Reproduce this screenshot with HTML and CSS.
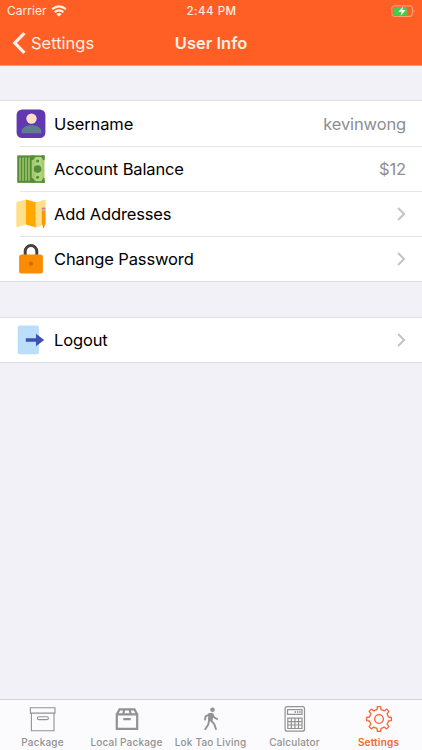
FILE: index.html
```
<!DOCTYPE html>
<html lang="en">
<head>
<meta charset="utf-8">
<title>User Info</title>
<link rel="stylesheet" href="styles.css">
</head>
<body>
<div class="app">
  <header class="header">
    <div class="status">
      <div class="carrier"><span class="carrier-name">Carrier</span>
        <svg width="16" height="12" viewBox="0 0 16 12" fill="none" stroke="#ffefe5" stroke-width="2.2"><path d="M1.2 4.2Q8-1.6 14.8 4.2M3.6 7.2Q8 3.6 12.4 7.2"/><path d="M5.3 9Q8 7 10.7 9L8 11.6Z" fill="#ffefe5" stroke="none"/></svg>
      </div>
      <span class="time">2:44 PM</span>
      <svg class="battery" width="25" height="13" viewBox="0 0 25 13"><rect x=".8" y=".8" width="20.6" height="10.6" rx="2.8" fill="none" stroke="#ff9c72" stroke-width="1.2"/><rect x="2.2" y="2.2" width="14.2" height="7.8" rx="1.3" fill="#45cc50"/><path d="M22.7 4.2Q24.7 6.1 22.7 8Z" fill="#ff9c72"/><path d="M12.4 1.4L7.3 6.7h3.5L9.5 10.8l5.3-5.7h-3.6Z" fill="#fff"/></svg>
    </div>
    <nav class="navbar">
      <div class="back"><svg width="14" height="22" viewBox="0 0 14 22" fill="none" stroke="#fff3ec" stroke-width="3.2"><path d="M12.4 1.2L2.8 11l9.6 9.8"/></svg><span class="back-text">Settings</span></div>
      <h1 class="title">User Info</h1>
    </nav>
  </header>
  <main class="content">
    <section class="group">
      <div class="row">
        <svg class="icon" viewBox="0 0 30 30"><rect x=".6" y=".5" width="28.8" height="28.5" rx="5.5" fill="#6039b2"/><path d="M5.6 24.2v-1.5C5.6 18.8 9.8 16.2 15.5 16.2S25.4 18.8 25.4 22.7v1.5Z" fill="#607d8b"/><circle cx="15.5" cy="9.6" r="5.2" fill="#ffdfc2"/></svg>
        <span class="label">Username</span><span class="value">kevinwong</span>
      </div>
      <div class="row">
        <svg class="icon" viewBox="0 0 30 30"><path fill="#a5cc74" d="M1.5 1.5h27v27.3h-27z"/><path fill="#568c38" d="M1.3 1.5h2v27.3h-2zM4.7 1.5h1.6v27.3h-1.6zM7.7 1.5h1.6v27.3H7.7zM10.7 1.5h1.6v27.3h-1.6zM13.7 1.5h2v27.3h-2zM1.3 1.5h27.3v2H1.3zM1.3 26.8h27.3v2H1.3z"/><path fill="#568c38" d="M15 1.5h4c0 3-1.3 4.7-4 4.7ZM28.6 1.5h-3c0 3 1 4.7 3 4.7ZM15 28.8h4c0-3-1.3-4.7-4-4.7ZM28.6 28.8h-3c0-3 1-4.7 3-4.7Z"/><path fill="#afd77c" d="M19.5 3h6v24.2h-6z"/><circle cx="21.6" cy="15.1" r="3.8" fill="#568c38"/><circle cx="21.6" cy="6.9" r="1.5" fill="#568c38"/><circle cx="21.6" cy="23.3" r="1.5" fill="#568c38"/></svg>
        <span class="label">Account Balance</span><span class="value">$12</span>
      </div>
      <div class="row">
        <svg class="icon" viewBox="0 0 30 30"><path d="M.3 3L10 .5v25L.3 28.5Z" fill="#ffe08a"/><path d="M10 .5L19.8 3.3v25.2L10 25.5Z" fill="#ffa800"/><path d="M19.8 3.3L29.6.5v24.7l-9.8 3.3Z" fill="#ffe08a"/><path d="M25.8 11h3.7v13.8L27.7 29 25.8 24.8Z" fill="#ff9800"/><path d="M25.8 9.8h3.7V12h-3.7Z" fill="#b0bec5"/><path d="M25.8 10.3V9.6q0-1.2 1.2-1.2h1.3q1.2 0 1.2 1.2v.7Z" fill="#e57373"/><path d="M27.1 27.5h1.2L27.7 29Z" fill="#6d4c30"/></svg>
        <span class="label">Add Addresses</span><svg class="chevron" viewBox="0 0 9 14"><path d="M1.1 1l6 6-6 6"/></svg>
      </div>
      <div class="row">
        <svg class="icon" viewBox="0 0 30 30"><path d="M9.2 13V7.3a5.8 5.8 0 0111.6 0V13" fill="none" stroke="#424242" stroke-width="3"/><rect x="3.1" y="10.5" width="23.8" height="19" rx="2.6" fill="#fb8c00"/><circle cx="15" cy="19.7" r="2.1" fill="#c76f0b"/></svg>
        <span class="label">Change Password</span><svg class="chevron" viewBox="0 0 9 14"><path d="M1.1 1l6 6-6 6"/></svg>
      </div>
    </section>
    <section class="group">
      <div class="row">
        <svg class="icon" viewBox="0 0 30 30"><rect x="1.7" y=".5" width="21.3" height="28.8" rx="2" fill="#bbdefb"/><path d="M9.8 13.2H20V8.7L28.2 15 20 21.3V16.8H9.8Z" fill="#3f51b5"/></svg>
        <span class="label">Logout</span><svg class="chevron" viewBox="0 0 9 14"><path d="M1.1 1l6 6-6 6"/></svg>
      </div>
    </section>
  </main>
  <footer class="tabs">
    <div class="tab"><svg viewBox="-14 -14 28 28" stroke-width="1.1"><path d="M-12.6-11.3h24.6v5.4H-12.6zM-11.6-5.9v17.6h22.6V-5.9"/><rect x="-5.6" y="-2.2" width="11" height="2.8" rx="1.4"/></svg><span>Package</span></div>
    <div class="tab"><svg viewBox="-14 -14 28 28" stroke-width="2.2"><path d="M-10.2-4.6h20.4V9.9h-20.4ZM-10.2-4.6L-7.5-9.6H7.5l2.7 5M-2.8-9.6L-3.8-4.6M2.7-9.6L3.7-4.6M-3.7.2h7.4"/></svg><span>Local Package</span></div>
    <div class="tab"><svg viewBox="-14 -14 28 28" stroke-width="1.9"><circle cx="1.5" cy="-9.2" r="2.3" fill="#929292" stroke="none"/><path d="M-2.7-5.8L1.6-6.2 2.6-3 1.3 2-3 1.4Z" fill="#929292" stroke="none"/><path d="M-1-5L-5.4-2.7-6.1 1.3M1.4-5.2L3.1-1.6 6.8.3M-1.7.8L-2.8 5.7-6.2 10.7M-.5 1L3.2 4.9 5.2 10.8"/></svg><span>Lok Tao Living</span></div>
    <div class="tab"><svg viewBox="-14 -14 28 28" stroke-width="1.2"><rect x="-9.9" y="-12.3" width="19.4" height="24.5" rx="2"/><path d="M-7.5-9.3H7v4.6H-7.5ZM.3-8v2M2.7-8v2M5-8v2M-7.2-.9H7V9.5H-7.2ZM-3.6-.9v10.4M-.1-.9v10.4M3.5-.9v10.4M-7.2 2.6H7M-7.2 6H7"/></svg><span>Calculator</span></div>
    <div class="tab active"><svg viewBox="-14 -14 28 28" stroke-width="1.3" stroke-linejoin="round"><path d="M-2-9.4-1.6-12.4 1.6-12.4 2-9.4Q3.8-9.1 5.23-8.06L7.64-9.9 9.9-7.64 8.06-5.23Q9.1-3.8 9.4-2L12.4-1.6 12.4 1.6 9.4 2Q9.1 3.8 8.06 5.23L9.9 7.64 7.64 9.9 5.23 8.06Q3.8 9.1 2 9.4L1.6 12.4-1.6 12.4-2 9.4Q-3.8 9.1-5.23 8.06L-7.64 9.9-9.9 7.64-8.06 5.23Q-9.1 3.8-9.4 2L-12.4 1.6-12.4-1.6-9.4-2Q-9.1-3.8-8.06-5.23L-9.9-7.64-7.64-9.9-5.23-8.06Q-3.8-9.1-2-9.4Z"/><circle r="4.4"/></svg><span>Settings</span></div>
  </footer>
</div>
</body>
</html>
```
FILE: styles.css
```
* { box-sizing: border-box; }
body { margin: 0; font-family: Inter, "Liberation Sans", sans-serif; background: #f2f1f7; }
svg { display: block; flex: none; }
.app { width: 422px; height: 750px; display: flex; flex-direction: column; overflow: hidden; white-space: nowrap; }
.header { height: 66px; background: #ff5e24; color: #ffefe5; border-bottom: 1px solid #f69c80; }
.status { height: 22px; display: grid; grid-template-columns: 1fr auto 1fr; align-items: center; padding: 0 6px 0 7px; font-size: 12px; line-height: 22px; }
.carrier { display: flex; align-items: center; gap: 4px; letter-spacing: 0.05px; }
.time { font-size: 11.5px; font-weight: 500; letter-spacing: 0.5px; }
.battery { justify-self: end; }
.navbar { height: 42px; display: grid; grid-template-columns: 1fr auto 1fr; align-items: center; padding: 0 12px; font-size: 16.5px; }
.back { display: flex; align-items: center; gap: 5px; letter-spacing: 0; }
.title { margin: 0; font-size: 16.5px; font-weight: 600; letter-spacing: 0; }
.content { flex: 1; padding-top: 34px; }
.group { background: #fff; border-top: 1px solid #e2e1e6; border-bottom: 1px solid #dedde2; margin-bottom: 35px; }
.row { height: 45px; display: flex; align-items: center; padding: 0 16px 1px; font-size: 16.5px; color: #000; background: linear-gradient(#e5e5e8, #e5e5e8) 20px 100% / 100% 1px no-repeat; }
.row:first-child { height: 46px; padding-bottom: 0; }
.row:last-child { height: 44px; padding-bottom: 0; background: none; }
.icon { width: 30px; height: 30px; margin-right: 8px; }
.label { letter-spacing: -0.13px; }
.value { margin-left: auto; color: #8e8e93; letter-spacing: -0.13px; }
.chevron { width: 9px; height: 14px; margin-left: auto; fill: none; stroke: #c3c3c7; stroke-width: 2; }
.tabs { height: 51px; background: #fbfbfd; border-top: 1px solid #d5d3db; display: grid; grid-template-columns: repeat(5, 84px); padding-left: 0.5px; }
.tab { display: flex; flex-direction: column; align-items: center; padding-top: 5px; color: #929292; font-size: 10px; font-weight: 500; letter-spacing: 0.2px; }
.tab svg { width: 28px; height: 28px; fill: none; stroke: #929292; }
.tab span { line-height: 14px; margin-top: 2px; }
.tab.active { color: #f26535; font-weight: 600; }
.tab.active svg { stroke: #f26535; }
```
